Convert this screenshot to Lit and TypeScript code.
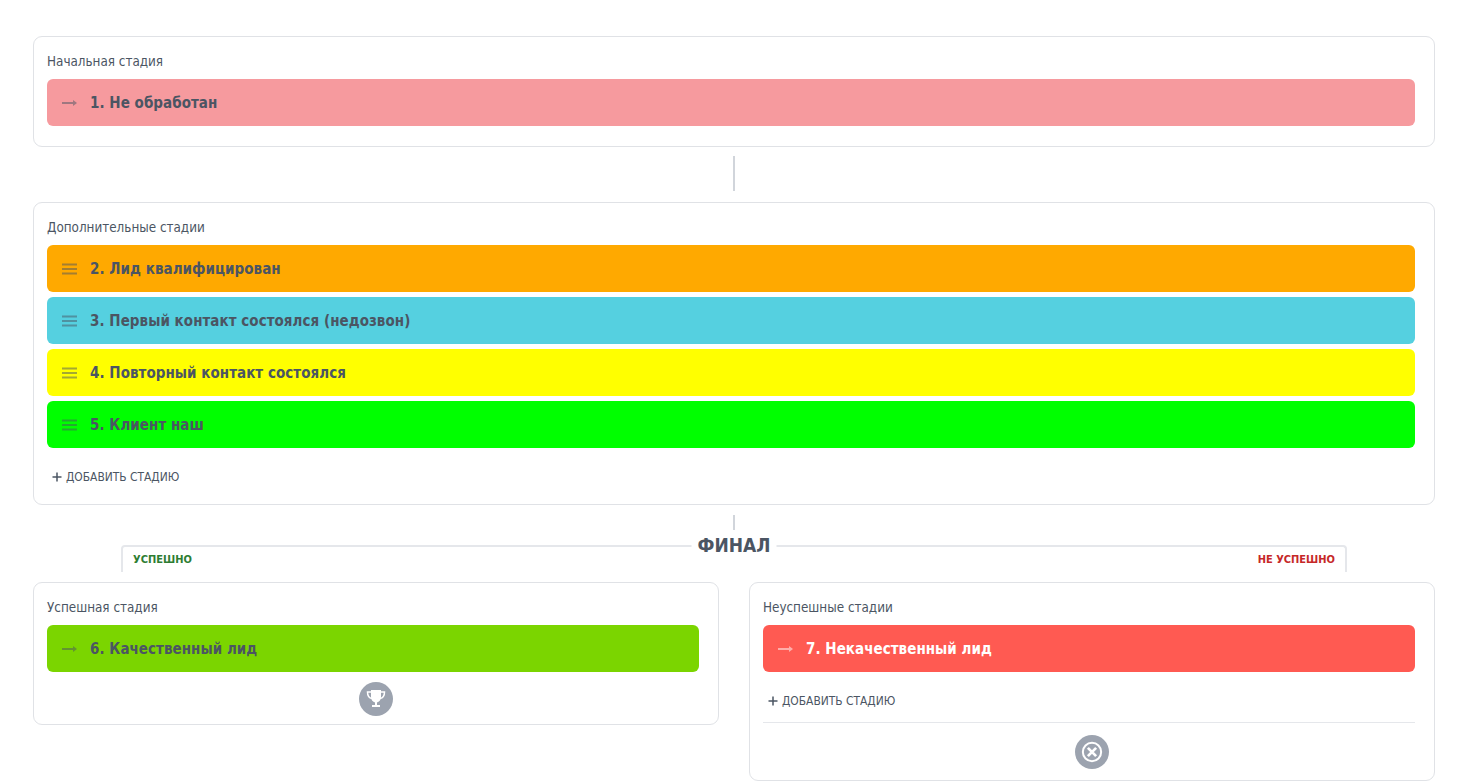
import { LitElement, html, css } from "lit";
import { customElement } from "lit/decorators.js";

const arrow = html`<svg class="ic" width="16" height="16" viewBox="0 0 16 16"><path d="M1 8h12" stroke="currentColor" stroke-width="2" fill="none"/><path d="M12 5l4 3-4 3z" fill="currentColor"/></svg>`;
const menu = html`<svg class="ic" width="16" height="16" viewBox="0 0 16 16"><path d="M1 3.500h15M1 8h15M1 12.500h15" stroke="currentColor" stroke-width="2" fill="none"/></svg>`;

@customElement("app-root")
export class AppRoot extends LitElement {
  static styles = css`
    :host { display: block; font-family: "DejaVu Sans", sans-serif; font-stretch: condensed; color: #4b5563; background: #fff; height: 783px; overflow: hidden; }
    .page { padding: 36px 31px 0 33px; display: flex; flex-direction: column; }
    .card { border: 1px solid #e0e2e6; border-radius: 9px; padding: 13px 19px 20px 13px; background: #fff; display: flex; flex-direction: column; }
    .label { font-size: 13.350px; line-height: 24px; height: 29px; color: #4b5563; }
    .rows { display: flex; flex-direction: column; gap: 5px; }
    .row { height: 47px; border-radius: 6px; display: flex; align-items: center; padding-left: 14px; font-weight: 700; font-size: 15px; letter-spacing: .04px; color: #4b5563; }
    .row .ic { opacity: .5; margin-right: 13px; flex: none; }
    .row.light { color: #fff; }
    .connector { width: 2px; background: #d1d5db; align-self: center; }
    .c1 { height: 35px; margin: 9px 0 11px; }
    .c2 { height: 15px; margin-top: 10px; }
    .add { display: flex; align-items: center; gap: 4px; font-size: 11.900px; line-height: 16px; color: #4b5563; padding-left: 5px; margin-top: 21px; }
    .add svg { flex: none; }
    .extra { padding-bottom: 19px; }
    .bracket { position: relative; box-sizing: border-box; height: 27px; margin: 15px 88px 10px; border: 2px solid #e5e7eb; border-bottom: 0; border-radius: 4px 4px 0 0; display: flex; justify-content: space-between; padding: 5px 10px 0; }
    .title { position: absolute; left: 50%; top: -14px; transform: translateX(-50%); background: #fff; padding: 0 6px; font-size: 19px; line-height: 24px; font-weight: 700; }
    .tag { font-size: 11px; font-weight: 700; line-height: 16px; }
    .ok { color: #2e7d32; }
    .bad { color: #c62828; }
    .cols { display: grid; grid-template-columns: 686px 686px; gap: 30px; align-items: start; }
    .badge { width: 34px; height: 34px; border-radius: 50%; background: #9ca3af; display: flex; align-items: center; justify-content: center; align-self: center; margin-left: 6px; }
    .win { padding-bottom: 8px; }
    .win .badge { margin-top: 10px; }
    .lose { padding-bottom: 11px; }
    .sep { border-top: 1px solid #e5e7eb; margin-top: 13px; padding-top: 12px; display: flex; justify-content: center; }
  `;

  row(text: string, bg: string, icon: unknown, light = false) {
    return html`<div class="row ${light ? "light" : ""}" style="background:${bg}">${icon}<span>${text}</span></div>`;
  }

  add() {
    return html`<div class="add"><svg width="10" height="10" viewBox="0 0 10 10"><path d="M5 .5v9M.5 5h9" stroke="#4b5563" stroke-width="1.500" fill="none"/></svg><span>ДОБАВИТЬ СТАДИЮ</span></div>`;
  }

  render() {
    return html`<div class="page">
      <section class="card">
        <div class="label">Начальная стадия</div>
        ${this.row("1. Не обработан", "#f69a9e", arrow)}
      </section>
      <div class="connector c1"></div>
      <section class="card extra">
        <div class="label">Дополнительные стадии</div>
        <div class="rows">
          ${this.row("2. Лид квалифицирован", "#ffa900", menu)}
          ${this.row("3. Первый контакт состоялся (недозвон)", "#55d0e0", menu)}
          ${this.row("4. Повторный контакт состоялся", "#ffff00", menu)}
          ${this.row("5. Клиент наш", "#00ff00", menu)}
        </div>
        ${this.add()}
      </section>
      <div class="connector c2"></div>
      <div class="bracket">
        <span class="tag ok">УСПЕШНО</span>
        <span class="title">ФИНАЛ</span>
        <span class="tag bad">НЕ УСПЕШНО</span>
      </div>
      <div class="cols">
        <section class="card win">
          <div class="label">Успешная стадия</div>
          ${this.row("6. Качественный лид", "#7bd500", arrow)}
          <div class="badge">
            <svg width="20" height="20" viewBox="0 0 20 20" fill="#fff"><path d="M5 1h10v7c0 3-2 5-4 5.500V16h3v2H6v-2h3v-2.500C7 13 5 11 5 8z"/><path d="M5 3H1.500c0 4 1.500 6 4.500 6.500M15 3h3.500c0 4-1.500 6-4.500 6.500" fill="none" stroke="#fff" stroke-width="1.500"/></svg>
          </div>
        </section>
        <section class="card lose">
          <div class="label">Неуспешные стадии</div>
          ${this.row("7. Некачественный лид", "#ff5a52", arrow, true)}
          ${this.add()}
          <div class="sep">
            <div class="badge">
              <svg width="22" height="22" viewBox="0 0 24 24" fill="none" stroke="#fff" stroke-width="2.200"><circle cx="12" cy="12" r="10"/><path d="M7.500 7.500l9 9M16.500 7.500l-9 9" stroke-width="3"/></svg>
            </div>
          </div>
        </section>
      </div>
    </div>`;
  }
}
